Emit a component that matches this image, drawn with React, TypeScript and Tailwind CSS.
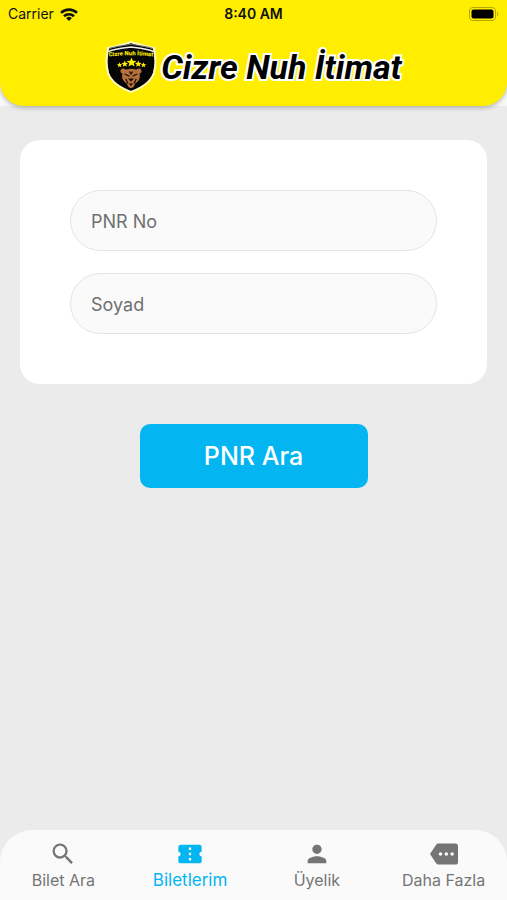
import React from 'react';
import { clsx } from 'clsx';
import type { IconType } from 'react-icons';
import { MdConfirmationNumber, MdMore, MdPerson, MdSearch } from 'react-icons/md';

interface Tab {
  label: string;
  icon: IconType;
  active?: boolean;
}

const tabs: Tab[] = [
  { label: 'Bilet Ara', icon: MdSearch },
  { label: 'Biletlerim', icon: MdConfirmationNumber, active: true },
  { label: 'Üyelik', icon: MdPerson },
  { label: 'Daha Fazla', icon: MdMore },
];

const fields = [
  { id: 'pnr', label: 'PNR No' },
  { id: 'surname', label: 'Soyad' },
];

const WifiIcon = () => (
  <svg viewBox="0 0 18 13" className="h-[13px] w-[18px]" aria-hidden="true">
    <g fill="none" stroke="#111" strokeWidth="2.6">
      <path d="M1 4.9a11.4 11.4 0 0 1 16 0" />
      <path d="M4 8.2a7.2 7.2 0 0 1 10 0" />
    </g>
    <path d="M9 13 6.2 10.2a4 4 0 0 1 5.6 0z" fill="#111" />
  </svg>
);

const BatteryIcon = () => (
  <svg viewBox="0 0 30 14" className="h-[14px] w-[30px]" aria-hidden="true">
    <rect x="0.5" y="0.5" width="26" height="13" rx="3.5" fill="none" stroke="#b3a800" />
    <rect x="2.5" y="2.5" width="22" height="9" rx="2" fill="#000" />
    <path d="M28 4.6c1.6.8 1.6 4 0 4.8z" fill="#b3a800" />
  </svg>
);

const Star = ({ x, y, r }: { x: number; y: number; r: number }) => (
  <path
    transform={`translate(${x} ${y}) scale(${r})`}
    d="M0-1 .26-.34.95-.31.42.13.59.81 0 .43-.59.81-.42.13-.95-.31-.26-.34z"
    fill="#ffee00"
  />
);

const Crest = () => (
  <svg viewBox="1 0 50 54" className="h-[54px] w-[52px]" preserveAspectRatio="none" aria-hidden="true">
    <path
      d="M26 2C19 5 10 6 4 8 2 18 2 26 4 33c3 9 12 15 22 19 10-4 19-10 22-19 2-7 2-15 0-25C42 6 33 5 26 2z"
      fill="#050505"
      stroke="#fffbc0"
      strokeWidth="2"
    />
    <path d="M5 8.5C12 6 20 5.500 26 4c6 1.500 14 2 21 4.500" fill="none" stroke="#666" />
    <path d="M4 11.5C12 8.500 19 8 26 7c7 1 14 1.500 22 4.500" fill="none" stroke="#eee" strokeWidth="1.4" />
    <path id="crest-arc" d="M2 17Q26 13.500 50 17" fill="none" />
    <text
      fill="#ffee00"
      fontFamily="Roboto, sans-serif"
      fontSize="5.8"
      fontWeight="900"
      textAnchor="middle"
    >
      <textPath href="#crest-arc" startOffset="50%">
        Cizre Nuh İtimat
      </textPath>
    </text>
    <Star x={15} y={25} r={2.8} />
    <Star x={20} y={24} r={3.4} />
    <Star x={26.5} y={22.5} r={5} />
    <Star x={33} y={24} r={3.4} />
    <Star x={38} y={25} r={2.8} />
    <g fill="#b5713c">
      <circle cx="18.5" cy="31" r="2.6" />
      <circle cx="33.5" cy="31" r="2.6" />
      <path d="M19 31c4-3 10-3 14 0 2 3 2 7 .5 9-1 2-2.500 3-3.500 3.500-.5 2.500-2 4.500-4 4.500s-3.500-2-4-4.500c-1-.5-2.500-1.500-3.500-3.500-1.500-2-1.500-6 .5-9z" />
    </g>
    <path
      d="m20 34 4.500 2.200M32 34l-4.500 2.200M21 39l2 4.500M31 39l-2 4.500M24.500 31.500 26 34l1.500-2.500"
      fill="none"
      stroke="#1a0c04"
      strokeWidth="1.2"
    />
    <path d="M23.2 38.500h5.600L26 41.700zM23.800 43.500h4.400L26 46z" fill="#1a0c04" />
  </svg>
);

const StatusBar = () => (
  <div className="grid grid-cols-3 items-center px-2 pt-1 text-sm text-[#111]">
    <div className="flex items-center gap-1.5">
      <span>Carrier</span>
      <WifiIcon />
    </div>
    <span className="text-center font-semibold">8:40 AM</span>
    <div className="flex justify-end">
      <BatteryIcon />
    </div>
  </div>
);

const Header = () => (
  <div className="bg-[#f8f8f8]">
    <header className="rounded-b-3xl bg-[#ffee00] pb-3 shadow-[0_2px_4px_rgba(0,0,0,0.25)]">
      <StatusBar />
      <div className="mt-4 flex items-center justify-center gap-1">
        <Crest />
        <h1 className="font-[Roboto,sans-serif] text-[34px] leading-[52px] font-bold whitespace-nowrap text-black italic [-webkit-text-stroke:4px_white] [paint-order:stroke_fill]">
          Cizre Nuh İtimat
        </h1>
      </div>
    </header>
  </div>
);

const TabBar = () => (
  <nav className="grid h-[70px] grid-cols-4 rounded-t-4xl bg-[#fafafa]">
    {tabs.map(({ label, icon: Icon, active }) => (
      <a
        key={label}
        href="#"
        aria-current={active ? 'page' : undefined}
        className={clsx(
          'flex flex-col items-center pt-2.5 whitespace-nowrap',
          active ? 'text-[17px] text-[#03b6f2]' : 'text-base text-[#757575]',
        )}
      >
        <Icon className="size-7" />
        <span className="leading-6">{label}</span>
      </a>
    ))}
  </nav>
);

const App = () => {
  return (
    <div className="flex min-h-screen flex-col bg-[#ebebeb] font-[Inter,sans-serif]">
      <Header />
      <main className="flex-1 px-5 pt-[34px]">
        <form onSubmit={(e) => e.preventDefault()}>
          <div className="flex flex-col gap-[22px] rounded-[20px] bg-white px-[50px] py-[50px]">
            {fields.map(({ id, label }) => (
              <input
                key={id}
                id={id}
                type="text"
                aria-label={label}
                placeholder={label}
                className="h-[61px] w-full rounded-full border border-[#e4e4e4] bg-[#fafafa] px-5 pt-0.5 text-lg text-[#333] outline-none placeholder:text-[#707070]"
              />
            ))}
          </div>
          <button
            type="submit"
            className="mx-auto mt-10 block h-16 w-[228px] rounded-[10px] bg-[#03b6f2] pt-0.5 text-[25px] font-medium text-white"
          >
            PNR Ara
          </button>
        </form>
      </main>
      <TabBar />
    </div>
  );
};

export default App;
